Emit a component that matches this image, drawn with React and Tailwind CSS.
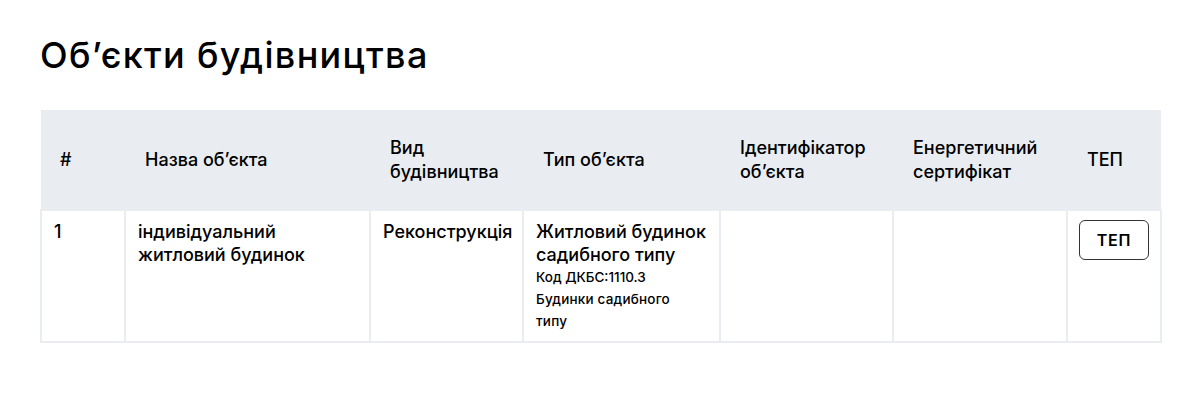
export default function App() {
  const font = { fontFamily: "Inter, 'Noto Sans', sans-serif" };
  const th = "pl-5 pr-3 text-[18px] leading-[24px] font-medium";
  const td = "border-2 border-[#e9edf1] px-3 pt-[9px] pb-[9px] text-[18px] leading-[23px] font-medium";
  return (
    <div className="w-[1200px] h-[412px] bg-white text-black" style={font}>
      <div className="px-10 pt-[31px]">
        <h1 className="text-[36px] leading-[48px] font-medium tracking-[1.3px]">Об’єкти будівництва</h1>
        <table className="mt-[31px] w-[1120px] table-fixed border-collapse">
          <colgroup>
            <col className="w-[84px]" />
            <col className="w-[245px]" />
            <col className="w-[153px]" />
            <col className="w-[197px]" />
            <col className="w-[173px]" />
            <col className="w-[174px]" />
            <col className="w-[94px]" />
          </colgroup>
          <thead>
            <tr className="bg-[#e9edf1] h-[100px] text-left align-middle">
              <th className="pl-[19px] pr-3 text-[18px] leading-[24px] font-medium">#</th>
              <th className={th}>Назва об’єкта</th>
              <th className={th}>Вид будівництва</th>
              <th className={th}>Тип об’єкта</th>
              <th className={th}>Ідентифікатор об’єкта</th>
              <th className={th}>Енергетичний сертифікат</th>
              <th className={th}>ТЕП</th>
            </tr>
          </thead>
          <tbody>
            <tr className="align-top">
              <td className={td}>1</td>
              <td className={td}>індивідуальний житловий будинок</td>
              <td className={td}>Реконструкція</td>
              <td className={td}>
                <div>Житловий будинок садибного типу</div>
                <div className="text-[13.5px] leading-[22px]">Код ДКБС:1110.3</div>
                <div className="text-[13.5px] leading-[22px] tracking-[0.2px]">Будинки садибного<br />типу</div>
              </td>
              <td className={td}></td>
              <td className={td}></td>
              <td className="border-2 border-[#e9edf1] pl-[11px] pr-3 pt-[9px] pb-[9px]">
                <button className="w-[70px] h-[40px] border border-[#333] rounded-[6px] text-[16px] font-semibold tracking-[0.8px] bg-white">ТЕП</button>
              </td>
            </tr>
          </tbody>
        </table>
      </div>
    </div>
  );
}
